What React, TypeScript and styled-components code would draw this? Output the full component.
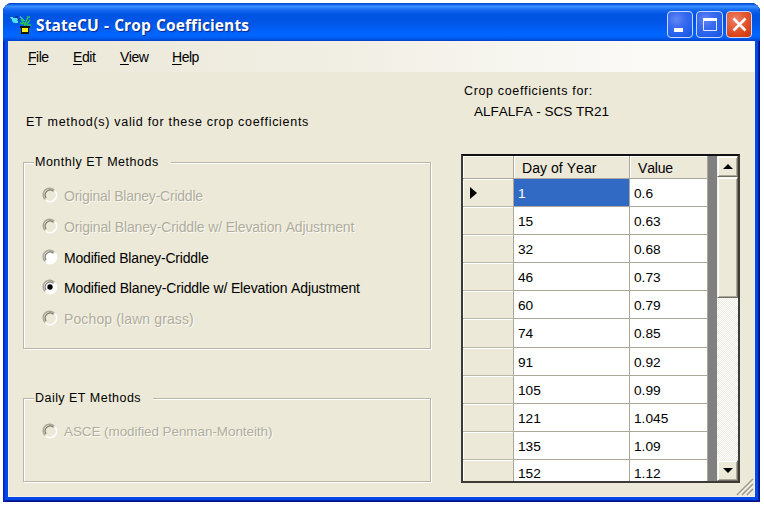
import React from "react";
import styled, { createGlobalStyle } from "styled-components";

const FACE = "#ece9d8";

const Global = createGlobalStyle`
  * { box-sizing: border-box; }
  body { margin: 0; background: #fff; font-family: "Liberation Sans", Arial, sans-serif; font-kerning: none; color: #000; }
`;

const Desktop = styled.div`
  width: 764px;
  height: 506px;
  padding: 3px 4px 4px 3px;
  background: #fff;
  overflow: hidden;
`;

const Frame = styled.div`
  display: flex;
  flex-direction: column;
  width: 757px;
  height: 499px;
  padding: 0 5px 5px;
  border-radius: 9px 9px 0 0;
  overflow: hidden;
  background: #0148e8;
  box-shadow: inset 1px 0 #0020c8, inset 2px 0 #0831d9, inset -1px 0 #00138c, inset -2px 0 #001ea0, inset 0 -1px #00138c, inset 0 -2px #001ea0;
`;

const TitleBar = styled.header`
  display: flex;
  align-items: center;
  flex: none;
  height: 38px;
  margin: 0 -5px;
  padding: 5px 8px 0 7px;
  background: linear-gradient(#0040c0 0, #1a6df2 5%, #3a90ff 9%, #1468f0 18%, #0054e3 30%, #0055e5 50%, #0060fa 72%, #0066ff 86%, #005bf0 93%, #0040c8 100%);
`;

const Title = styled.h1`
  flex: 1;
  margin: 1px 0 0 4px;
  font: 700 15.5px "Open Sans", "Noto Sans", sans-serif;
  letter-spacing: 0.1px;
  word-spacing: 1px;
  color: #fff;
  text-shadow: 1px 1px 1px #0b2a86;
  white-space: nowrap;
`;

const Controls = styled.div`
  display: flex;
  gap: 3px;
`;

const ControlButton = styled.button<{ $close?: boolean }>`
  width: 26.5px;
  height: 27px;
  padding: 0;
  border: 1px solid #c9d8ff;
  border-radius: 4px;
  background: ${(p) =>
    p.$close
      ? "radial-gradient(circle at 35% 30%, #ea8468 0, #e5603c 35%, #dc4419 70%, #c03a14 100%)"
      : "radial-gradient(circle at 35% 30%, #6288f4 0, #3b6bf0 35%, #2460ec 70%, #1a50d4 100%)"};
  svg { display: block; }
`;

const MenuBar = styled.nav`
  display: flex;
  flex: none;
  height: 31px;
  background: linear-gradient(90deg, #ebe8d8, #f1efe4 45%, #fbfaf7 85%);
`;

const MenuItem = styled.span<{ $width: number; $spacing: number }>`
  width: ${(p) => p.$width}px;
  font-size: 14px;
  line-height: 32px;
  letter-spacing: ${(p) => p.$spacing}px;
  &:first-child { margin-left: 20px; }
  u { text-underline-offset: 2px; text-decoration-thickness: 1px; }
`;

const Client = styled.main`
  display: flex;
  flex: 1;
  min-height: 0;
  background: ${FACE};
  border: solid #f4f2e8;
  border-width: 0 1px 1px 1px;
`;

const Methods = styled.section`
  width: 454px;
  padding: 42px 0 0 14px;
`;

const Label = styled.p<{ $spacing: number; $size?: number; $indent?: number; $top?: number }>`
  margin: ${(p) => p.$top ?? 0}px 0 0 ${(p) => p.$indent ?? 0}px;
  font-size: ${(p) => p.$size ?? 12.5}px;
  line-height: 16px;
  letter-spacing: ${(p) => p.$spacing}px;
  white-space: nowrap;
`;

const Group = styled.fieldset<{ $height: number; $top: number }>`
  width: 408px;
  height: ${(p) => p.$height}px;
  margin: ${(p) => p.$top}px 0 0;
  padding: 0 0 0 19px;
  border: 1px solid #b9b6a5;
  box-shadow: inset 1px 1px #fff, 1px 1px #fff;
`;

const Legend = styled.legend<{ $spacing: number }>`
  margin-left: -9px;
  padding: 0 12px 0 1px;
  background: ${FACE};
  font-size: 12.5px;
  line-height: 16px;
  letter-spacing: ${(p) => p.$spacing}px;
`;

const Option = styled.label<{ $disabled?: boolean; $spacing: number; $size: number; $height: number }>`
  display: flex;
  align-items: center;
  gap: 6px;
  height: ${(p) => p.$height}px;
  margin-left: -1px;
  font-size: ${(p) => p.$size}px;
  letter-spacing: ${(p) => p.$spacing}px;
  white-space: nowrap;
  color: ${(p) => (p.$disabled ? "#b0ad9d" : "#000")};
  text-shadow: ${(p) => (p.$disabled ? "1px 1px #fbfaf4" : "none")};
  svg { flex: none; margin-top: -2px; }
`;

const OptionList = styled.div<{ $top: number }>`
  padding-top: ${(p) => p.$top}px;
`;

const Coefficients = styled.section`
  display: flex;
  flex-direction: column;
  flex: 1;
  align-items: flex-start;
  padding-top: 11px;
`;

const Grid = styled.div`
  display: flex;
  flex: none;
  width: 279px;
  height: 329px;
  margin: 34px 0 -10px -2px;
  border: 2px solid #3c3b36;
  border-top-color: #111;
  background: #808080;
`;

const Rows = styled.div`
  width: 245px;
  overflow: hidden;
  background: #fff;
`;

const HeadRow = styled.div`
  display: grid;
  grid-template-columns: 51px 116px 78px;
  height: 23px;
  background: ${FACE};
  border-bottom: 1px solid #aca899;
  box-shadow: inset 1px 1px #fff;
`;

const HeadCell = styled.div<{ $spacing?: number }>`
  padding-left: 8px;
  font-size: 14px;
  line-height: 25px;
  height: 22px;
  letter-spacing: ${(p) => p.$spacing ?? 0}px;
  border-right: 1px solid #aca899;
  box-shadow: inset 1px 1px #fff;
`;

const Row = styled.div`
  display: grid;
  grid-template-columns: 51px 116px 78px;
  grid-template-rows: 28.1px;
  height: 28.1px;
  &:last-child { grid-template-rows: 21px; height: 21px; }
`;

const RowHead = styled.div`
  display: flex;
  align-items: center;
  padding-left: 7px;
  background: ${FACE};
  border-right: 1px solid #aca899;
  border-bottom: 1px solid #bdb9a9;
  box-shadow: inset 1px 1px #fff;
  ${Row}:last-child & { border-bottom: 0; }
`;

const Cell = styled.div<{ $selected?: boolean }>`
  padding: 7px 0 0 4px;
  font-size: 13.7px;
  line-height: 16px;
  border-right: 1px solid #aca899;
  border-bottom: 1px solid #aca899;
  background: ${(p) => (p.$selected ? "#316ac5" : "#fff")};
  color: ${(p) => (p.$selected ? "#fff" : "#000")};
  ${Row}:last-child & { border-bottom: 0; line-height: 14px; }
`;

const ScrollBar = styled.div`
  display: flex;
  flex-direction: column;
  width: 21px;
  margin-left: 9px;
  background: repeating-conic-gradient(#fff 0 25%, #efede3 0 50%) 0 0 / 2px 2px;
`;

const ScrollPart = styled.div<{ $height: number }>`
  display: flex;
  align-items: center;
  justify-content: center;
  height: ${(p) => p.$height}px;
  background: ${FACE};
  border: 1px solid;
  border-color: #f4f2e8 #716f64 #716f64 #f4f2e8;
  box-shadow: inset 1px 1px #fff, inset -1px -1px #aca899;
  &:last-child { margin-top: auto; }
`;

const GripCorner = styled.div`
  align-self: flex-end;
  margin-top: auto;
  height: 18px;
  svg { display: block; }
`;

function CropIcon() {
  return (
    <svg width="22" height="20" viewBox="0 0 22 20">
      <path d="M0 2h3v2H1zM2 3h5l1 2v3H4L2 6z" fill="#4fe0f5" />
      <path d="M5 2h3M7.500 5.500l2-2" stroke="#0a1a50" fill="none" />
      <path d="M10 2l4 4M10 1l5 5" stroke="#39a9ee" fill="none" />
      <path d="M11 4l3 4 1 3M13 9l-3-1M15 9l3-7M16 10l4-5M17 10h4M13 4v4M17 2h3" stroke="#25c84c" strokeWidth="1.4" fill="none" />
      <path d="M10 11h10v2h-1v6h-8v-6h-1z" fill="#10180c" />
      <path d="M12 13h6v4h-6z" fill="#fff21c" />
    </svg>
  );
}

function Radio({ checked, disabled }: { checked?: boolean; disabled?: boolean }) {
  return (
    <svg width="16" height="16" viewBox="0 0 16 16">
      <circle cx="8" cy="8" r="6" fill={disabled ? FACE : "#fff"} />
      <path d="M3.1 12.2A6.400 6.400 0 0 1 12.2 3.100" fill="none" stroke="#aaa797" strokeWidth="1.5" />
      <path d="M4.1 11A5 5 0 0 1 11.4 4.3" fill="none" stroke="#716f64" strokeWidth="1.1" />
      <path d="M13.200 4A6.600 6.600 0 0 1 4 13.300" fill="none" stroke="#fff" strokeWidth="1.6" />
      {checked && <circle cx="8" cy="8" r="2.7" fill="#000" />}
    </svg>
  );
}

const monthly = [
  { text: "Original Blaney-Criddle", disabled: true, spacing: -0.22, height: 31 },
  { text: "Original Blaney-Criddle w/ Elevation Adjustment", disabled: true, spacing: -0.15, height: 31 },
  { text: "Modified Blaney-Criddle", spacing: -0.18, height: 31 },
  { text: "Modified Blaney-Criddle w/ Elevation Adjustment", checked: true, spacing: -0.13, height: 30 },
  { text: "Pochop (lawn grass)", disabled: true, spacing: 0.12, height: 31 },
];

const coefficients = [
  ["1", "0.6"], ["15", "0.63"], ["32", "0.68"], ["46", "0.73"], ["60", "0.79"], ["74", "0.85"],
  ["91", "0.92"], ["105", "0.99"], ["121", "1.045"], ["135", "1.09"], ["152", "1.12"],
];

export default function App() {
  return (
    <Desktop>
      <Global />
      <Frame>
        <TitleBar>
          <CropIcon />
          <Title>StateCU - Crop Coefficients</Title>
          <Controls>
            <ControlButton aria-label="Minimize">
              <svg width="25" height="25"><path d="M6 16h9v4H6z" fill="#fff" /></svg>
            </ControlButton>
            <ControlButton aria-label="Maximize">
              <svg width="25" height="25">
                <path d="M6.500 6.500h13v12h-13z" fill="none" stroke="#dfe8ff" />
                <path d="M6 6h14v3H6z" fill="#fff" />
              </svg>
            </ControlButton>
            <ControlButton $close aria-label="Close">
              <svg width="25" height="25"><path d="M6.500 6.500l12 12M18.500 6.500l-12 12" stroke="#fff" strokeWidth="2.6" /></svg>
            </ControlButton>
          </Controls>
        </TitleBar>
        <MenuBar>
          <MenuItem $width={45} $spacing={-0.5}><u>F</u>ile</MenuItem>
          <MenuItem $width={47} $spacing={-0.4}><u>E</u>dit</MenuItem>
          <MenuItem $width={52} $spacing={-0.5}><u>V</u>iew</MenuItem>
          <MenuItem $width={50} $spacing={-0.5}><u>H</u>elp</MenuItem>
        </MenuBar>
        <Client>
          <Methods>
            <Label $spacing={0.7} $indent={3}>ET method(s) valid for these crop coefficients</Label>
            <Group $height={195} $top={24}>
              <Legend $spacing={0.5}>Monthly ET Methods</Legend>
              <OptionList $top={10}>
                {monthly.map((m) => (
                  <Option key={m.text} $disabled={m.disabled} $spacing={m.spacing} $size={14} $height={m.height}>
                    <Radio checked={m.checked} disabled={m.disabled} />
                    {m.text}
                  </Option>
                ))}
              </OptionList>
            </Group>
            <Group $height={92} $top={41}>
              <Legend $spacing={0.46}>Daily ET Methods</Legend>
              <OptionList $top={10}>
                <Option $disabled $spacing={-0.08} $size={13.5} $height={31}>
                  <Radio disabled />
                  ASCE (modified Penman-Monteith)
                </Option>
              </OptionList>
            </Group>
          </Methods>
          <Coefficients>
            <Label $spacing={0.65} $indent={1}>Crop coefficients for:</Label>
            <Label $spacing={0} $size={13.5} $indent={11} $top={5}>ALFALFA - SCS TR21</Label>
            <Grid>
              <Rows>
                <HeadRow>
                  <HeadCell />
                  <HeadCell $spacing={0.05}>Day of Year</HeadCell>
                  <HeadCell $spacing={-0.2}>Value</HeadCell>
                </HeadRow>
                {coefficients.map(([day, value], i) => (
                  <Row key={day}>
                    <RowHead>
                      {i === 0 && <svg width="7" height="12"><path d="M0 0l7 6-7 6z" fill="#000" /></svg>}
                    </RowHead>
                    <Cell $selected={i === 0}>{day}</Cell>
                    <Cell>{value}</Cell>
                  </Row>
                ))}
              </Rows>
              <ScrollBar>
                <ScrollPart $height={21}>
                  <svg width="10" height="5"><path d="M0 5l5-5 5 5z" fill="#000" /></svg>
                </ScrollPart>
                <ScrollPart $height={121} />
                <ScrollPart $height={21}>
                  <svg width="10" height="5"><path d="M0 0l5 5 5-5z" fill="#000" /></svg>
                </ScrollPart>
              </ScrollBar>
            </Grid>
            <GripCorner>
              <svg width="18" height="18">
                <path d="M2 17L17 2M7 17L17 7M12 17l5-5" stroke="#fff" strokeWidth="1.5" />
                <path d="M1 17L17 1M6 17L17 6M11 17l6-6" stroke="#9d9a8b" strokeWidth="1.6" />
              </svg>
            </GripCorner>
          </Coefficients>
        </Client>
      </Frame>
    </Desktop>
  );
}
